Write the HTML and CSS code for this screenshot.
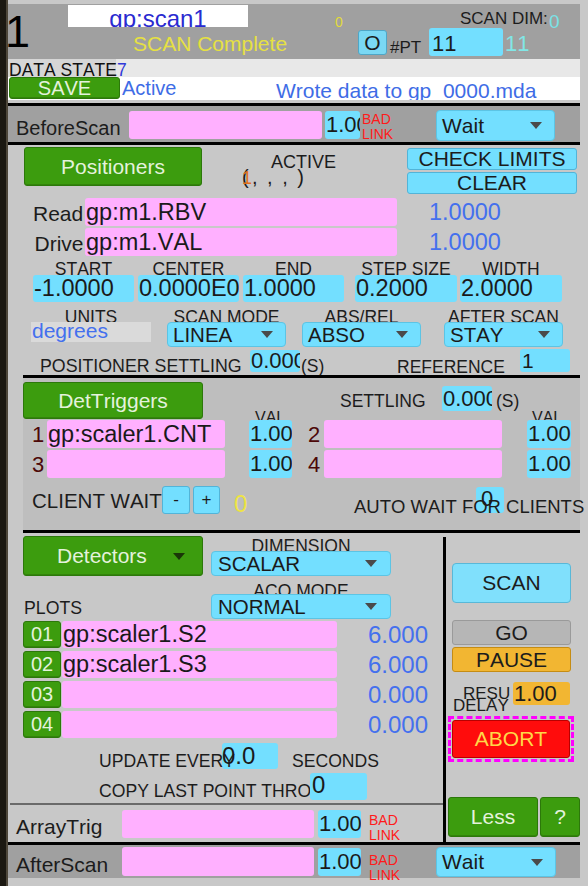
FILE: index.html
```html
<!DOCTYPE html>
<html>
<head>
<meta charset="utf-8">
<title>scan</title>
<link rel="stylesheet" href="styles.css">
</head>
<body>
<div class="screen">
  <div class="edge"></div>
  <div class="main">
    <div class="topgap"></div>
    <div class="hdr">
      <div class="bignum">1</div>
      <div class="hdr-body">
        <div class="hdr-r1">
          <div class="scanname">gp:scan1</div>
          <div class="yel0">0</div>
          <div class="dimlbl">SCAN DIM:</div>
          <div class="dimval">0</div>
        </div>
        <div class="hdr-r2">
          <div class="status">SCAN Complete</div>
          <div class="obtn">O</div>
          <div class="ptlbl">#PT</div>
          <div class="ptin">11</div>
          <div class="ptval">11</div>
        </div>
      </div>
    </div>
    <div class="dsrow"><div class="dslbl">DATA STATE</div><div class="dsval">7</div></div>
    <div class="saverow">
      <div class="gbtn savebtn">SAVE</div>
      <div class="active">Active</div>
      <div class="wrote">Wrote data to gp_0000.mda</div>
    </div>
    <div class="gap3"></div>
    <div class="hline"></div>
    <div class="linkrow before">
      <div class="lklbl">BeforeScan</div>
      <div class="pink bs-pink"></div>
      <div class="cyan val sval bs-cyan">1.000</div>
      <div class="bad bs-bad">BAD<br>LINK</div>
      <div class="combo bs-wait"><span>Wait</span><span class="tri"></span></div>
    </div>
    <div class="hline"></div>

    <div class="pos">
      <div class="posA">
        <div class="gbtn posbtn">Positioners</div>
        <div class="actcol">
          <div class="actlbl">ACTIVE</div>
          <div class="parens">(<span class="act1">1</span>, , , )</div>
        </div>
        <div class="chkcol">
          <div class="cbtn">CHECK LIMITS</div>
          <div class="cbtn">CLEAR</div>
        </div>
      </div>
      <div class="prow read">
        <div class="plabel">Read</div>
        <div class="pink val ppv">gp:m1.RBV</div>
        <div class="pmon">1.0000</div>
      </div>
      <div class="prow drive">
        <div class="plabel">Drive</div>
        <div class="pink val ppv">gp:m1.VAL</div>
        <div class="pmon">1.0000</div>
      </div>
      <div class="params">
        <div class="pcol c-start"><div class="plbl">START</div><div class="cyan val pin">-1.0000</div></div>
        <div class="pcol c-center"><div class="plbl">CENTER</div><div class="cyan val pin">0.0000E00</div></div>
        <div class="pcol c-end"><div class="plbl">END</div><div class="cyan val pin">1.0000</div></div>
        <div class="pcol c-step"><div class="plbl">STEP SIZE</div><div class="cyan val pin">0.2000</div></div>
        <div class="pcol c-width"><div class="plbl">WIDTH</div><div class="cyan val pin">2.0000</div></div>
      </div>
      <div class="modes">
        <div class="mcol m-units"><div class="mlbl">UNITS</div><div class="units">degrees</div></div>
        <div class="mcol m-mode"><div class="mlbl">SCAN MODE</div><div class="combo mcombo"><span>LINEA</span><span class="tri"></span></div></div>
        <div class="mcol m-abs"><div class="mlbl">ABS/REL</div><div class="combo mcombo"><span>ABSO</span><span class="tri"></span></div></div>
        <div class="mcol m-after"><div class="mlbl">AFTER SCAN</div><div class="combo mcombo"><span>STAY</span><span class="tri"></span></div></div>
      </div>
      <div class="settle">
        <div class="pslbl">POSITIONER SETTLING</div>
        <div class="cyan val psin">0.000</div>
        <div class="psunit">(S)</div>
        <div class="reflbl">REFERENCE</div>
        <div class="cyan val refin">1</div>
      </div>
    </div>

    <div class="hline ind"></div>
    <div class="trig">
      <div class="trigA">
        <div class="gbtn trigbtn">DetTriggers</div>
        <div class="vlbl v1">VAL</div>
        <div class="settl">SETTLING</div>
        <div class="cyan val settin">0.000</div>
        <div class="settunit">(S)</div>
        <div class="vlbl v2">VAL</div>
      </div>
      <div class="trow">
        <div class="tnum">1</div>
        <div class="pink val tpink">gp:scaler1.CNT</div>
        <div class="cyan val sval tcyan">1.000</div>
        <div class="tnum tnum2">2</div>
        <div class="pink val tpink"></div>
        <div class="cyan val sval tcyan tcyan2">1.000</div>
      </div>
      <div class="trow trow2">
        <div class="tnum">3</div>
        <div class="pink val tpink"></div>
        <div class="cyan val sval tcyan">1.000</div>
        <div class="tnum tnum2">4</div>
        <div class="pink val tpink"></div>
        <div class="cyan val sval tcyan tcyan2">1.000</div>
      </div>
      <div class="twait">
        <div class="cwlbl">CLIENT WAIT</div>
        <div class="pm">-</div>
        <div class="pm pm2">+</div>
        <div class="cwval">0</div>
        <div class="awlbl">AUTO WAIT FOR CLIENTS</div>
        <div class="cyan val awbox">0</div>
      </div>
    </div>
    <div class="hline ind"></div>

    <div class="lower">
      <div class="lleft">
        <div class="detA">
          <div class="detleft">
            <div class="gbtn detbtn"><span>Detectors</span><span class="tri dk"></span></div>
            <div class="plots">PLOTS</div>
          </div>
          <div class="detright">
            <div class="dlbl">DIMENSION</div>
            <div class="combo dcombo"><span>SCALAR</span><span class="tri"></span></div>
            <div class="dlbl alb">ACQ MODE</div>
            <div class="combo dcombo"><span>NORMAL</span><span class="tri"></span></div>
          </div>
        </div>
        <div class="plotrow">
          <div class="gbtn pnum">01</div>
          <div class="pink val ppink">gp:scaler1.S2</div>
          <div class="pval">6.000</div>
        </div>
        <div class="plotrow">
          <div class="gbtn pnum">02</div>
          <div class="pink val ppink">gp:scaler1.S3</div>
          <div class="pval">6.000</div>
        </div>
        <div class="plotrow">
          <div class="gbtn pnum">03</div>
          <div class="pink val ppink"></div>
          <div class="pval">0.000</div>
        </div>
        <div class="plotrow">
          <div class="gbtn pnum">04</div>
          <div class="pink val ppink"></div>
          <div class="pval">0.000</div>
        </div>
        <div class="updrow">
          <div class="updlbl">UPDATE EVERY</div>
          <div class="cyan val updin">0.0</div>
          <div class="seclbl">SECONDS</div>
        </div>
        <div class="copyrow">
          <div class="copylbl">COPY LAST POINT THROUGH</div>
          <div class="cyan val copyin">0</div>
        </div>
        <div class="thin"></div>
        <div class="atrow">
          <div class="atlbl">ArrayTrig</div>
          <div class="pink atpink"></div>
          <div class="cyan val sval atcyan">1.000</div>
          <div class="bad atbad">BAD<br>LINK</div>
        </div>
      </div>
      <div class="vline"></div>
      <div class="lright">
        <div class="scanbtn">SCAN</div>
        <div class="gobtn">GO</div>
        <div class="gobtn pausebtn">PAUSE</div>
        <div class="resurow">
          <div class="resulbl"><span class="r1">RESU</span><span class="r2">DELAY</span></div>
          <div class="resuin">1.00</div>
        </div>
        <div class="abortwrap"><div class="abortbtn">ABORT</div></div>
        <div class="btnrow">
          <div class="gbtn lessbtn">Less</div>
          <div class="gbtn helpbtn">?</div>
        </div>
      </div>
    </div>

    <div class="hline"></div>
    <div class="linkrow after">
      <div class="lklbl">AfterScan</div>
      <div class="pink as-pink"></div>
      <div class="cyan val sval as-cyan">1.000</div>
      <div class="bad as-bad">BAD<br>LINK</div>
      <div class="combo as-wait"><span>Wait</span><span class="tri"></span></div>
    </div>
  </div>
</div>
</body>
</html>
```

FILE: styles.css
```css
* { box-sizing: border-box; }
html, body { margin: 0; padding: 0; }
body { font-family: "Liberation Sans", Arial, Helvetica, sans-serif; color: #1c1c1c; background: #c8c8c8; font-kerning: none; }

.screen { display: flex; width: 588px; height: 886px; background: #c8c8c8; overflow: hidden; }
.edge { flex: none; width: 8px; background: linear-gradient(to right, #1b1811 0, #1b1811 6px, #4e473a 6px, #4e473a 8px); }
.main { flex: none; width: 572px; display: flex; flex-direction: column; white-space: nowrap; }
.main div { flex-shrink: 0; }

/* common boxes */
.pink { position: relative; background: #ffb0ff; border-radius: 3px; overflow: hidden; }
.cyan { position: relative; background: #73dfff; border-radius: 3px; overflow: hidden; }
.val { font-size: 23.5px; line-height: 28px; padding-left: 1px; white-space: nowrap; overflow: hidden; color: #1a1a1a; }
.sval { font-size: 22px; }
.gbtn { background: #3c9c0e; border: 1px solid #2c780a; border-radius: 3px; color: #e4f2dc; text-align: center; box-shadow: inset 0 -1px 0 rgba(0,0,0,.15); }
.combo { position: relative; display: flex; align-items: center; justify-content: space-between; background: #73dfff; border: 1px solid #5cc4e4; border-radius: 4px; padding: 0 12px 0 5px; font-size: 20.5px; color: #1a1a1a; }
.tri { width: 0; height: 0; border-left: 6px solid transparent; border-right: 6px solid transparent; border-top: 7px solid #4a4a4a; }
.tri.dk { border-top-color: #1a3608; }
.bad { width: 40px; font-size: 14px; line-height: 15px; color: #ff1a1a; }
.hline { height: 3px; background: #000; }
.hline.ind { margin-left: 15px; }

/* header */
.topgap { height: 4px; }
.hdr { display: flex; align-items: flex-start; height: 55px; background: #a0a0a0; }
.bignum { width: 25px; height: 45px; margin: 5px 0 0 -3px; font-size: 45px; line-height: 45px; color: #000; }
.hdr-body { display: flex; flex-direction: column; }
.hdr-r1 { display: flex; align-items: flex-start; height: 24px; }
.hdr-r2 { display: flex; align-items: flex-start; height: 31px; }
.scanname { width: 180px; height: 22px; margin: 1px 0 0 38px; background: #fff; color: #2a2ad0; font-size: 24px; line-height: 28px; text-align: center; overflow: hidden; }
.yel0 { width: 8px; margin: 11px 0 0 87px; font-size: 14px; line-height: 14px; color: #e2da3a; }
.dimlbl { width: 89px; margin: 6px 0 0 117px; font-size: 17px; line-height: 17px; }
.dimval { width: 11px; margin-top: 8px; font-size: 19px; line-height: 19px; color: #7ae2e6; }
.status { width: 155px; margin: 5px 0 0 103px; font-size: 21px; line-height: 21px; color: #e6e042; }
.obtn { width: 29px; height: 25px; margin: 2px 0 0 70px; background: #7ad8f4; border: 1px solid #4fa6c6; border-radius: 3px; font-size: 21px; line-height: 23px; text-align: center; }
.ptlbl { width: 36px; margin: 11px 0 0 3px; font-size: 17px; line-height: 17px; }
.ptin { width: 74px; height: 28px; margin-left: 3px; padding-left: 3px; background: #73dfff; border-radius: 3px; font-size: 22px; line-height: 32px; overflow: hidden; }
.ptval { width: 30px; margin: 5px 0 0 2px; font-size: 22px; line-height: 22px; color: #82e6e6; }

/* data state / save */
.dsrow { display: flex; height: 18px; background: #e8e8e8; }
.dslbl { width: 108px; height: 18px; padding: 2px 0 0 1px; background: #d6d6d6; font-size: 17.5px; line-height: 18px; color: #111; }
.dsval { padding: 2px 0 0 1px; font-size: 17.5px; line-height: 18px; color: #3038d8; }
.saverow { display: flex; align-items: flex-start; height: 23px; background: #fff; overflow: hidden; }
.savebtn { width: 111px; height: 22px; margin-left: 1px; font-size: 20px; line-height: 20px; }
.active { width: 154px; margin-left: 2px; font-size: 20px; line-height: 23px; color: #3e6ce6; }
.wrote { font-size: 21px; line-height: 27px; color: #3e6ce6; }
.gap3 { height: 3px; }

/* link rows */
.linkrow { display: flex; align-items: flex-start; background: #a0a0a0; }
.before { height: 36px; }
.after { height: 33px; }
.lklbl { font-size: 20px; line-height: 20px; }
.before .lklbl { width: 113px; margin: 12px 0 0 8px; }
.bs-pink { width: 193px; height: 28px; margin-top: 5px; }
.bs-cyan { width: 35px; height: 28px; margin: 5px 0 0 3px; }
.bs-bad { margin: 6px 0 0 2px; }
.bs-wait { width: 119px; height: 31px; margin: 4px 0 0 34px; font-size: 21px; }
.after .lklbl { width: 106px; margin: 9px 0 0 8px; font-size: 21px; line-height: 21px; }
.as-pink { width: 192px; height: 29px; margin-top: 2px; }
.as-cyan { width: 43px; height: 28px; margin: 3px 0 0 4px; }
.as-bad { margin: 8px 0 0 8px; }
.as-wait { width: 120px; height: 30px; margin: 2px 0 0 27px; font-size: 21px; }

/* positioners */
.pos { height: 230px; display: flex; flex-direction: column; }
.posA { display: flex; align-items: flex-start; height: 50px; }
.posbtn { width: 178px; height: 39px; margin: 2px 0 0 16px; font-size: 21px; line-height: 37px; }
.actcol { width: 100px; margin-left: 40px; display: flex; flex-direction: column; }
.actlbl { height: 18px; margin: 8px 0 0 29px; font-size: 18px; line-height: 18px; }
.parens { height: 20px; margin-top: -4px; font-size: 20px; line-height: 20px; letter-spacing: 2px; }
.act1 { font-size: 18px; color: #e0701c; margin-left: -8.7px; letter-spacing: 0; }
.chkcol { width: 170px; margin: 3px 0 0 65px; display: flex; flex-direction: column; gap: 2px; }
.cbtn { height: 22px; background: #73dfff; border: 1px solid #52b4d8; border-radius: 3px; font-size: 21px; line-height: 20px; text-align: center; }
.prow { display: flex; align-items: flex-start; height: 28px; }
.read { margin-top: 3px; }
.drive { margin-top: 2px; }
.plabel { font-size: 21px; line-height: 21px; margin-top: 5px; }
.read .plabel { width: 52px; margin-left: 25px; }
.drive .plabel { width: 50.5px; margin-left: 26.5px; }
.ppv { width: 312px; height: 28px; }
.pmon { margin-left: 32px; font-size: 23.5px; line-height: 28px; color: #4470ee; }
.params { display: flex; align-items: flex-start; margin-top: 5px; }
.pcol { display: flex; flex-direction: column; align-items: center; }
.plbl { height: 14px; font-size: 17.5px; line-height: 17px; }
.pin { width: 100%; height: 27px; line-height: 27px; }
.c-start { width: 101px; margin-left: 25px; }
.c-center { width: 101px; margin-left: 4px; }
.c-end { width: 101px; margin-left: 4px; }
.c-step { width: 102px; margin-left: 11px; }
.c-width { width: 102px; margin-left: 3px; }
.modes { display: flex; align-items: flex-start; margin-top: 7px; }
.mcol { display: flex; flex-direction: column; align-items: center; }
.mlbl { height: 13px; font-size: 17.5px; line-height: 17px; }
.units { width: 100%; height: 20px; background: #dadada; color: #4470ee; font-size: 21px; line-height: 17px; padding-left: 1px; overflow: hidden; }
.mcombo { width: 100%; height: 25px; }
.m-units { width: 120px; margin-left: 23px; }
.m-mode { width: 119px; margin-left: 16px; }
.m-abs { width: 119px; margin-left: 16px; }
.m-after { width: 119px; margin-left: 23px; }
.settle { display: flex; align-items: flex-start; height: 26px; margin-top: 2px; }
.pslbl { width: 210px; margin: 9px 0 0 32px; font-size: 17.8px; line-height: 17px; }
.psin { width: 50px; height: 22px; margin-top: 1px; font-size: 22px; line-height: 22px; }
.psunit { width: 30px; margin-top: 9px; font-size: 17.5px; line-height: 17px; padding-left: 1px; }
.reflbl { width: 107px; margin: 10px 0 0 67px; font-size: 17.5px; line-height: 17px; }
.refin { width: 50px; height: 23px; margin-left: 16px; font-size: 21px; line-height: 23px; padding-left: 2px; }

/* det triggers */
.trig { height: 152px; margin-left: 15px; background: #bebebe; display: flex; flex-direction: column; }
.trigA { display: flex; align-items: flex-start; height: 42px; }
.trigbtn { width: 180px; height: 37px; margin-top: 4px; font-size: 21px; line-height: 35px; }
.vlbl { width: 30px; height: 16px; margin-top: 32px; font-size: 16px; line-height: 16px; }
.v1 { margin-left: 52px; }
.v2 { margin-left: 8px; }
.settl { width: 87px; margin: 15px 0 0 55px; font-size: 17.5px; line-height: 17px; }
.settin { width: 50px; height: 25px; margin: 8px 0 0 15px; font-size: 22px; line-height: 25px; }
.settunit { width: 28px; margin: 15px 0 0 4px; font-size: 17.5px; line-height: 17px; }
.trow { display: flex; align-items: flex-start; height: 28px; }
.trow2 { margin-top: 2px; }
.tnum { width: 15px; margin: 4px 0 0 9px; font-size: 22px; line-height: 22px; color: #4c0808; }
.tnum2 { width: 16px; margin-left: 16px; }
.tpink { width: 178px; height: 28px; }
.tcyan { width: 43px; height: 28px; margin-left: 24px; }
.tcyan2 { width: 44px; margin-left: 25px; }
.twait { display: flex; align-items: flex-start; height: 28px; margin-top: 8px; }
.cwlbl { width: 130px; margin: 5px 0 0 9px; font-size: 20.5px; line-height: 20px; }
.pm { width: 28px; height: 28px; background: #73dfff; border: 1px solid #52b4d8; border-radius: 3px; font-size: 17px; line-height: 25px; text-align: center; }
.pm2 { width: 27px; margin-left: 3px; }
.cwval { width: 16px; margin: 6px 0 0 14px; font-size: 24px; line-height: 24px; color: #eee444; }
.awlbl { position: relative; z-index: 2; width: 234px; margin: 12px 0 0 104px; font-size: 18.5px; line-height: 18px; }
.awbox { width: 28px; height: 26px; margin: 1px 0 0 -112px; font-size: 22px; line-height: 23px; padding-left: 5px; }

/* lower area */
.lower { display: flex; align-items: flex-start; height: 309px; }
.lleft { width: 435px; display: flex; flex-direction: column; }
.vline { width: 3px; height: 305px; margin-top: 4px; background: #000; }
.lright { width: 134px; display: flex; flex-direction: column; align-items: flex-start; }
.detA { display: flex; align-items: flex-start; height: 88px; }
.detleft { width: 180px; margin-left: 15px; display: flex; flex-direction: column; }
.detbtn { height: 40px; margin-top: 3px; display: flex; align-items: center; justify-content: space-between; padding: 0 17px 0 33px; font-size: 21px; }
.plots { height: 17px; margin: 24px 0 0 1px; font-size: 17.7px; line-height: 17px; }
.detright { width: 180px; margin-left: 8px; display: flex; flex-direction: column; align-items: center; }
.dlbl { height: 13px; margin-top: 5px; font-size: 17.5px; line-height: 17px; }
.dlbl.alb { height: 11px; margin-top: 7px; }
.dcombo { width: 180px; height: 25px; padding: 0 13px 0 6px; }
.plotrow { display: flex; align-items: flex-start; height: 27px; }
.plotrow + .plotrow { margin-top: 3px; }
.pnum { width: 38px; height: 27px; margin-left: 15px; font-size: 20px; line-height: 25px; }
.ppink { width: 275px; height: 27px; margin-left: 1px; line-height: 27px; }
.pval { width: 91px; text-align: right; font-size: 24px; line-height: 27px; color: #4470ee; }
.updrow { display: flex; align-items: flex-start; height: 27px; margin-top: 4px; }
.updlbl { position: relative; z-index: 2; width: 123px; margin: 11px 0 0 91px; font-size: 17.6px; line-height: 17px; }
.updin { width: 56px; height: 26px; margin-top: 1px; font-size: 24px; line-height: 25px; padding-left: 0; }
.seclbl { margin: 11px 0 0 14px; font-size: 17.6px; line-height: 17px; }
.copyrow { display: flex; align-items: flex-start; height: 28px; margin-top: 3px; }
.copylbl { width: 211px; height: 17px; margin: 11px 0 0 91px; font-size: 17.6px; line-height: 17px; overflow: hidden; }
.copyin { width: 57px; height: 27px; margin-top: 1px; font-size: 24px; line-height: 23px; padding-left: 2px; }
.thin { height: 2px; margin: 3px 0 0 2px; background: #6a6a6a; }
.atrow { display: flex; align-items: flex-start; height: 37px; }
.atlbl { width: 106px; margin: 11px 0 0 8px; font-size: 21px; line-height: 21px; }
.atpink { width: 192px; height: 28px; margin-top: 5px; }
.atcyan { width: 43px; height: 28px; margin: 5px 0 0 4px; }
.atbad { margin: 8px 0 0 8px; }

/* right column */
.scanbtn { width: 119px; height: 40px; margin: 30px 0 0 6px; background: #80e0fc; border: 1px solid #58b8d8; border-radius: 4px; font-size: 21px; line-height: 38px; text-align: center; }
.gobtn { width: 119px; height: 25px; margin: 17px 0 0 6px; background: #b6b6b6; border: 1px solid #9a9a9a; border-radius: 3px; font-size: 21px; line-height: 23px; text-align: center; }
.pausebtn { margin-top: 2px; background: #f2b632; border-color: #c58c14; }
.resurow { display: flex; align-items: flex-start; height: 23px; margin-top: 10px; }
.resulbl { width: 61px; margin: 6px 0 0 6px; font-size: 17px; line-height: 12px; }
.resulbl span { display: block; }
.r1 { margin-left: 11px; }
.r2 { margin-left: 1px; }
.resuin { width: 57px; height: 23px; background: #f2b632; border-radius: 3px; font-size: 22px; line-height: 23px; padding-left: 1px; overflow: hidden; }
.abortwrap { width: 126px; height: 46px; margin: 11px 0 0 2px; border: 3px dashed #ff00ff; padding: 1px; }
.abortbtn { height: 38px; background: #ff0c0c; border: 1px solid #b80000; border-radius: 3px; color: #ffd848; font-size: 21px; line-height: 36px; text-align: center; }
.btnrow { display: flex; gap: 2px; margin: 35px 0 0 2px; }
.lessbtn { width: 90px; height: 40px; font-size: 21px; line-height: 38px; }
.helpbtn { width: 40px; height: 40px; font-size: 21px; line-height: 38px; }
```
